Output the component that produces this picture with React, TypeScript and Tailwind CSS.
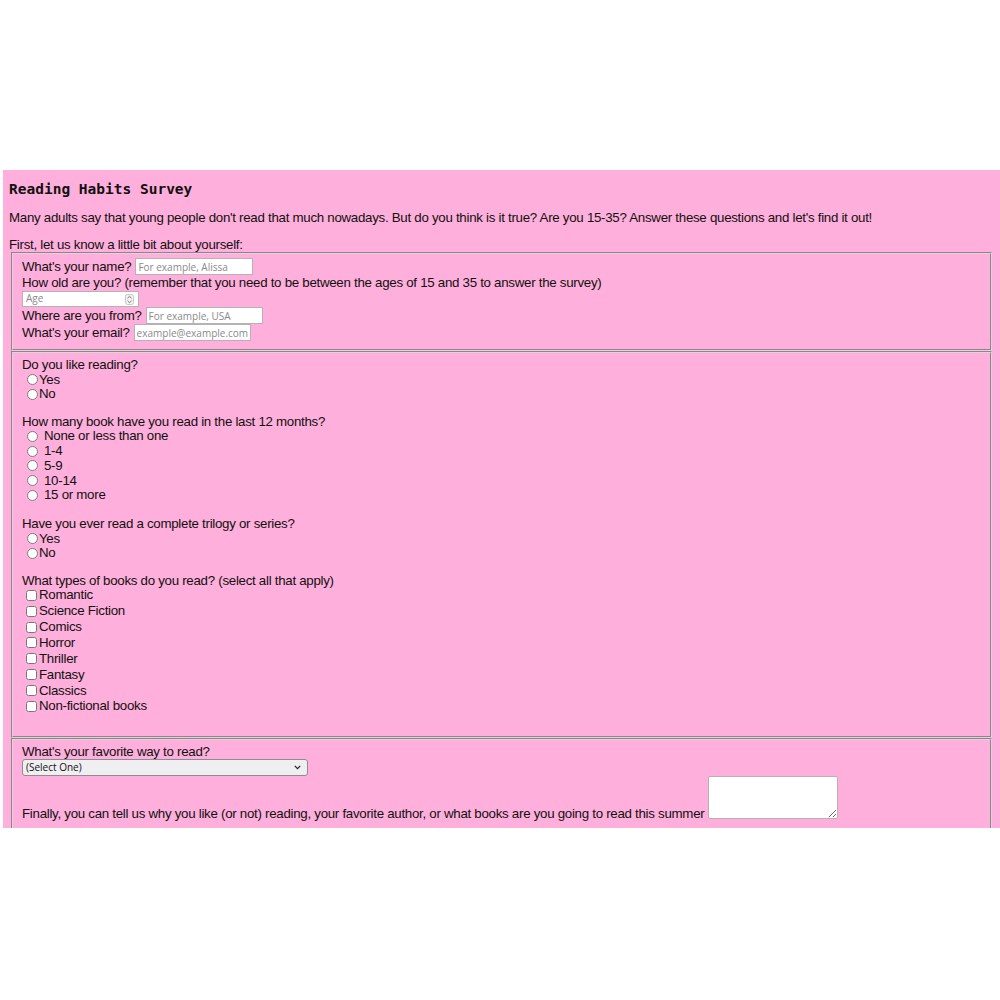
import React from "react";

const txt = "font-['Liberation_Sans',Arial,sans-serif] text-[13.3px] tracking-[-0.28px] text-[#111]";
const ph = "font-['Open_Sans','Noto_Sans',sans-serif] text-[10px] tracking-normal placeholder:text-[#8a8a8a]";

function Radio({ label, wide, h }: { label: string; wide?: boolean; h: string }) {
  return (
    <label className={`flex items-center ${h}`}>
      <input type="radio" className="m-0 ml-[5px] w-[11px] h-[11px] accent-[#555]" />
      <span className={wide ? "ml-[6px]" : "ml-[1px]"}>{label}</span>
    </label>
  );
}

function Check({ label }: { label: string }) {
  return (
    <label className="flex items-center h-[15.857px]">
      <input type="checkbox" className="m-0 ml-[4px] w-[11px] h-[11px]" />
      <span className="ml-[2px]">{label}</span>
    </label>
  );
}

const fs = "mx-[2px] border-2 [border-style:groove] border-[#e2d2dc] pl-[9px]";

export default function App() {
  return (
    <div className="w-[1000px] bg-white">
      <div className="h-[170px]" />
      <div className={`ml-[3px] w-[997px] h-[658px] overflow-hidden bg-[#ffafdb] px-[6px] pt-[10px] ${txt}`}>
        <h1 className="font-['DejaVu_Sans_Mono',monospace] font-bold text-[14.5px] tracking-normal leading-[18px] text-[#111]">
          Reading Habits Survey
        </h1>
        <p className="mt-[12px] leading-[16px]">
          Many adults say that young people don't read that much nowadays. But do you think is it true? Are you 15-35? Answer these questions and let's find it out!
        </p>
        <p className="mt-[11px] leading-[15px]">First, let us know a little bit about yourself:</p>

        <fieldset className={`${fs} pt-[4px] pb-[8px]`}>
          <div className="flex items-center h-[17px]">
            <span>What's your name?</span>
            <input className={`ml-[4px] w-[118px] h-[17px] bg-white border border-[#b9b0b6] px-[2px] ${ph}`} placeholder="For example, Alissa" />
          </div>
          <div className="flex items-center h-[15px] pt-[1px]">
            How old are you? (remember that you need to be between the ages of 15 and 35 to answer the survey)
          </div>
          <div className="flex items-center h-[17px]">
            <div className="relative w-[117px] h-[16px] bg-white border border-[#b9b0b6] flex items-center">
              <span className={`pl-[3px] ${ph} text-[#8a8a8a]`}>Age</span>
              <svg className="absolute right-[4px] top-[2px]" width="9" height="11" viewBox="0 0 9 11">
                <rect x="0.5" y="0.5" width="8" height="10" rx="2" fill="#f2f2f2" stroke="#c8c8c8" />
                <path d="M2.5 4.2 L4.5 2.4 L6.5 4.2" fill="none" stroke="#6a6a6a" strokeWidth="0.9" />
                <path d="M2.5 6.8 L4.5 8.6 L6.5 6.8" fill="none" stroke="#6a6a6a" strokeWidth="0.9" />
              </svg>
            </div>
          </div>
          <div className="flex items-center h-[17px]">
            <span>Where are you from?</span>
            <input className={`ml-[4px] w-[117px] h-[17px] bg-white border border-[#b9b0b6] px-[2px] ${ph}`} placeholder="For example, USA" />
          </div>
          <div className="flex items-center h-[17px]">
            <span>What's your email?</span>
            <input className={`ml-[4px] w-[117px] h-[17px] bg-white border border-[#b9b0b6] px-[2px] ${ph}`} placeholder="example@example.com" />
          </div>
        </fieldset>

        <fieldset className={`${fs} pt-[4px] pb-[22px]`}>
          <div className="flex items-center h-[15px]">Do you like reading?</div>
          <Radio label="Yes" h="h-[15px]" />
          <Radio label="No" h="h-[14px]" />

          <div className="flex items-center h-[15px] mt-[13px]">How many book have you read in the last 12 months?</div>
          <Radio wide label="None or less than one" h="h-[14.75px]" />
          <Radio wide label="1-4" h="h-[14.75px]" />
          <Radio wide label="5-9" h="h-[14.75px]" />
          <Radio wide label="10-14" h="h-[14.75px]" />
          <Radio wide label="15 or more" h="h-[14.75px]" />

          <div className="flex items-center h-[15px] mt-[13.25px]">Have you ever read a complete trilogy or series?</div>
          <Radio label="Yes" h="h-[15px]" />
          <Radio label="No" h="h-[14px]" />

          <div className="flex items-center h-[13.5px] mt-[14px]">What types of books do you read? (select all that apply)</div>
          <Check label="Romantic" />
          <Check label="Science Fiction" />
          <Check label="Comics" />
          <Check label="Horror" />
          <Check label="Thriller" />
          <Check label="Fantasy" />
          <Check label="Classics" />
          <Check label="Non-fictional books" />
        </fieldset>

        <fieldset className={`${fs} pt-[4px] pb-[20px]`}>
          <div className="flex items-center h-[15px]">What's your favorite way to read?</div>
          <div className="relative w-[286px] h-[17px] rounded-[3px] bg-[#efeef0] border border-[#8f8a8e] flex items-center">
            <span className="pl-[3px] font-['Open_Sans','Noto_Sans',sans-serif] text-[10px] tracking-normal text-[#111]">(Select One)</span>
            <svg className="absolute right-[6px] top-[5px]" width="7" height="5" viewBox="0 0 7 5">
              <path d="M0.8 0.8 L3.5 3.6 L6.2 0.8" fill="none" stroke="#222" strokeWidth="1.2" />
            </svg>
          </div>
          <div className="flex items-end">
            <span className="leading-[16px] mb-[-3px]">Finally, you can tell us why you like (or not) reading, your favorite author, or what books are you going to read this summer</span>
            <textarea className="ml-[4px] w-[130px] h-[43px] bg-white border border-[#b9b0b6] rounded-[2px] resize" />
          </div>
        </fieldset>
      </div>
    </div>
  );
}
